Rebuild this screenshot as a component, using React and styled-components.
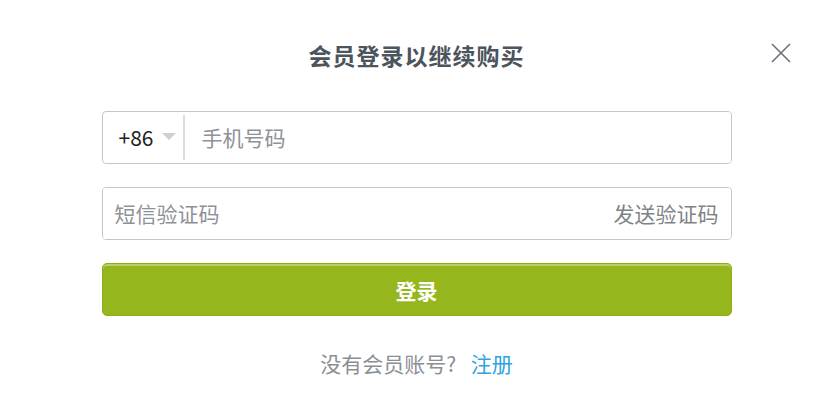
import { styled, createGlobalStyle } from "styled-components";

const GlobalStyle = createGlobalStyle`
  body {
    margin: 0;
    background: #ffffff;
    font-family: "Noto Sans CJK SC", "Noto Sans", sans-serif;
  }
`;

const App = () => {
  return (
    <Dialog>
      <GlobalStyle />
      <Close aria-label="close">
        <svg width="20" height="20" viewBox="0 0 20 20">
          <path d="M1 1L19 19M19 1L1 19" stroke="#6b7178" strokeWidth="1.6" />
        </svg>
      </Close>
      <Title>会员登录以继续购买</Title>
      <Form>
        <Field>
          <Code>
            +86
            <Caret />
          </Code>
          <Input placeholder="手机号码" $indent />
        </Field>
        <Field>
          <Input placeholder="短信验证码" />
          <SendButton type="button">发送验证码</SendButton>
        </Field>
        <Submit type="button">登录</Submit>
      </Form>
      <Footer>
        没有会员账号? <Link>注册</Link>
      </Footer>
    </Dialog>
  );
};

const Dialog = styled.div`
  position: relative;
  width: 833px;
  height: 418px;
  padding-top: 40px;
  box-sizing: border-box;
  background: #fff;
`;

const Close = styled.button`
  position: absolute;
  top: 43px;
  right: 42px;
  padding: 0;
  border: none;
  background: none;
  display: flex;
  cursor: pointer;
`;

const Title = styled.h1`
  margin: 0;
  height: 30px;
  line-height: 30px;
  text-align: center;
  font-size: 23px;
  font-weight: 700;
  letter-spacing: 1px;
  color: #4c545c;
`;

const Form = styled.div`
  width: 630px;
  margin: 41px auto 0;
  display: flex;
  flex-direction: column;
  gap: 23px;
`;

const Field = styled.div`
  height: 53px;
  box-sizing: border-box;
  border: 1px solid #c4c6c9;
  border-radius: 4px;
  display: flex;
  align-items: center;
  overflow: hidden;
`;

const Code = styled.div`
  width: 82px;
  height: 45px;
  box-sizing: border-box;
  padding-left: 16px;
  padding-bottom: 2px;
  border-right: 2px solid #dcdcdc;
  display: flex;
  align-items: center;
  gap: 9px;
  font-size: 21px;
  color: #222;
`;

const Caret = styled.span`
  width: 0;
  height: 0;
  border-left: 7px solid transparent;
  border-right: 7px solid transparent;
  border-top: 7px solid #cfcfcf;
`;

const Input = styled.input`
  flex: 1;
  min-width: 0;
  height: 100%;
  border: none;
  outline: none;
  padding: 0 0 2px ${(p) => (p.$indent ? "17px" : "12px")};
  font-family: inherit;
  font-size: 21px;
  color: #333;
  &::placeholder {
    color: #8e9196;
  }
`;

const SendButton = styled.button`
  height: 100%;
  padding: 0 12px 2px;
  border: none;
  background: #fff;
  font-family: inherit;
  font-size: 21px;
  color: #7f8388;
  cursor: pointer;
`;

const Submit = styled.button`
  height: 53px;
  border: 1px solid #8fae17;
  border-radius: 5px;
  background: #95b61c;
  box-shadow: inset 0 2px 0 rgba(255, 255, 255, 0.35);
  font-family: inherit;
  font-size: 21px;
  font-weight: 700;
  color: #fff;
  cursor: pointer;
`;

const Footer = styled.div`
  margin-top: 32px;
  line-height: 30px;
  text-align: center;
  font-size: 21px;
  color: #8a8f96;
`;

const Link = styled.a`
  margin-left: 10px;
  color: #2ea3dd;
  cursor: pointer;
`;

export default App;
